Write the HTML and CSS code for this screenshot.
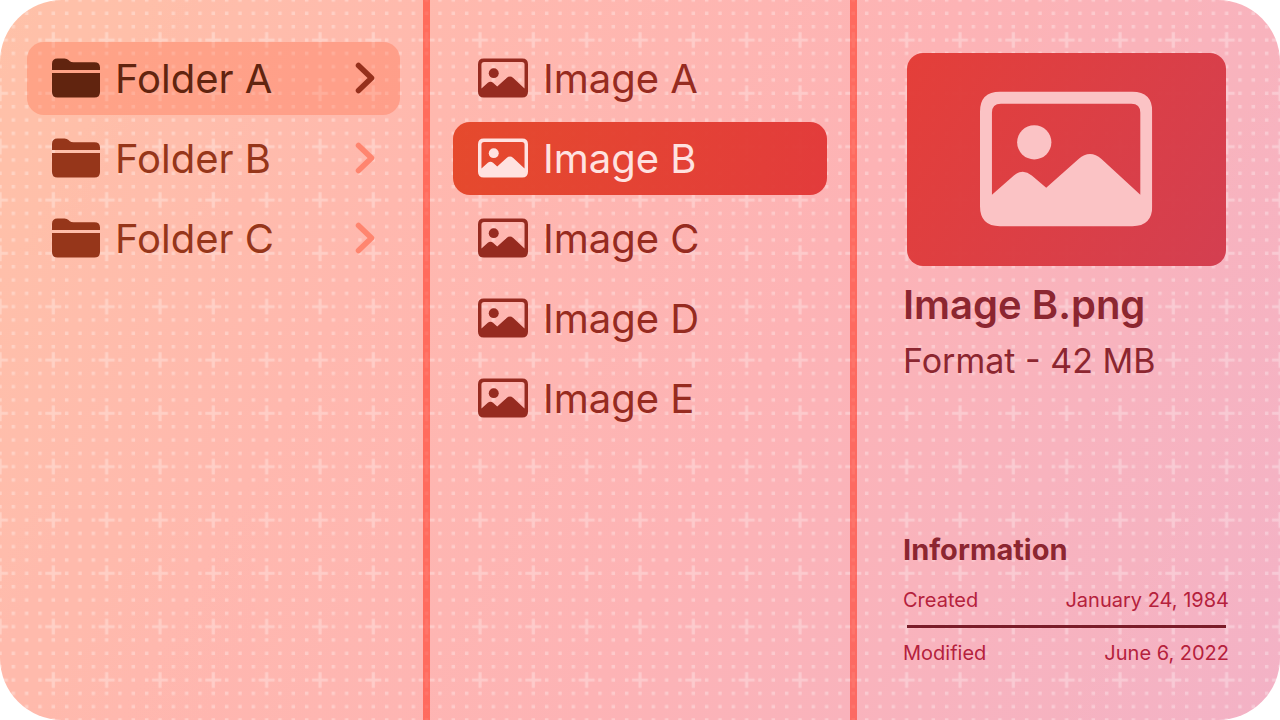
FILE: index.html
```html
<!DOCTYPE html>
<html lang="en">
<head>
    <meta charset="UTF-8">
    <meta name="viewport" content="width=device-width, initial-scale=1.0">
    <title>Column View</title>
    <link rel="stylesheet" href="styles.css">
</head>
<body>
    <!-- shared icons -->
    <svg class="sprite" aria-hidden="true">
        <symbol id="folder" viewBox="0 0 48 40">
            <path d="M0 12V6Q0 .5 5.5 .5H12.5Q15 .5 16.5 2L17.5 3Q19 4.3 21.5 4.3H42.5Q48 4.3 48 9.5V12Z"/>
            <path d="M0 15H48V34Q48 39.5 42.5 39.5H5.5Q0 39.5 0 34Z"/>
        </symbol>
        <symbol id="image" viewBox="0 0 173 135">
            <path fill-rule="evenodd" d="M20 0H153Q173 0 173 20V115Q173 135 153 135H20Q0 135 0 115V20Q0 0 20 0ZM21 12Q12 12 12 21V103.5L34 84Q43 76.5 52 84L66.5 96.5L99 67.5Q110.5 57.5 122 67.5L161 103.5V21Q161 12 152 12Z"/>
            <circle cx="54.5" cy="50.7" r="17.2"/>
        </symbol>
        <symbol id="chevron" viewBox="0 0 20 32">
            <path d="M3.5 3.5L16.5 16L3.5 28.5" fill="none" stroke="currentColor" stroke-width="5.5" stroke-linecap="round" stroke-linejoin="round"/>
        </symbol>
    </svg>

    <main class="browser">
        <svg class="grid-pattern" viewBox="0 0 960 540" preserveAspectRatio="xMinYMin slice" aria-hidden="true">
            <defs>
                <!-- 4x4 dots per tile, one of them swapped for a plus -->
                <pattern id="dots" width="40" height="40" patternUnits="userSpaceOnUse" x="-15" y="15">
                    <g stroke="#fff" stroke-width="2.6" stroke-dasharray="2.6 7.4">
                        <path d="M23.7 15H40M3.7 15H6.3"/>
                        <path d="M3.7 5H40M3.7 25H40M3.7 35H40"/>
                    </g>
                    <path d="M15 9V21M9 15H21" fill="none" stroke="#fff" stroke-width="2.4"/>
                </pattern>
            </defs>
            <rect width="100%" height="100%" fill="url(#dots)"/>
        </svg>

        <nav class="column folders" aria-label="Folders">
            <button class="row active" type="button">
                <svg class="icon"><use href="#folder"/></svg>
                <span>Folder A</span>
                <svg class="chevron"><use href="#chevron"/></svg>
            </button>
            <button class="row" type="button">
                <svg class="icon"><use href="#folder"/></svg>
                <span>Folder B</span>
                <svg class="chevron"><use href="#chevron"/></svg>
            </button>
            <button class="row" type="button">
                <svg class="icon"><use href="#folder"/></svg>
                <span>Folder C</span>
                <svg class="chevron"><use href="#chevron"/></svg>
            </button>
        </nav>

        <nav class="column images" aria-label="Images">
            <button class="row" type="button">
                <svg class="icon"><use href="#image"/></svg>
                <span>Image A</span>
            </button>
            <button class="row selected" type="button">
                <svg class="icon"><use href="#image"/></svg>
                <span>Image B</span>
            </button>
            <button class="row" type="button">
                <svg class="icon"><use href="#image"/></svg>
                <span>Image C</span>
            </button>
            <button class="row" type="button">
                <svg class="icon"><use href="#image"/></svg>
                <span>Image D</span>
            </button>
            <button class="row" type="button">
                <svg class="icon"><use href="#image"/></svg>
                <span>Image E</span>
            </button>
        </nav>

        <section class="preview">
            <div class="thumbnail">
                <svg><use href="#image"/></svg>
            </div>
            <h1>Image B.png</h1>
            <p>Format - 42 MB</p>

            <div class="information">
                <h2>Information</h2>
                <dl>
                    <div class="detail">
                        <dt>Created</dt>
                        <dd>January 24, 1984</dd>
                    </div>
                    <div class="detail">
                        <dt>Modified</dt>
                        <dd>June 6, 2022</dd>
                    </div>
                </dl>
            </div>
        </section>
    </main>
</body>
</html>
```
FILE: styles.css
```css
* {
    box-sizing: border-box;
}
body {
    font-family: Inter, Roboto, sans-serif;
    background-color: #fff;
    margin: 0;
}
.sprite {
    display: none;
}
.browser {
    position: relative;
    display: grid;
    grid-template-columns: 430fr 427fr 423fr;
    min-height: 100vh;
    border-radius: 62px;
    overflow: hidden;
    background: linear-gradient(118deg, #ffc2a8 0%, #ffb8ae 30%, #fdb3b5 58%, #f8b3be 78%, #f3b2c6 100%);
}
.grid-pattern {
    position: absolute;
    top: 0;
    left: 0;
    width: 100%;
    height: 100%;
    opacity: 0.3;
}

/* columns */
.column {
    position: relative;
    display: flex;
    flex-direction: column;
    gap: 7px;
    padding: 42px 23px;
    border-right: 7px solid rgba(255, 45, 25, 0.55);
}
.folders {
    padding-left: 27px;
}
.row {
    display: flex;
    align-items: center;
    height: 73px;
    padding: 0 25px 2px;
    border: none;
    border-radius: 17px;
    background: none;
    font-family: inherit;
    font-size: 40px;
    text-align: left;
    cursor: pointer;
}
.row span {
    flex: 1;
    padding-top: 2px;
}
.row .icon {
    width: 50px;
    height: 40px;
    margin-right: 15px;
    fill: currentColor;
}
.folders .icon {
    width: 48px;
}
.row .chevron {
    width: 20px;
    height: 32px;
    color: #ff856f;
}
.folders .row {
    color: #96361a;
}
.folders .active {
    color: #61240f;
    background-color: rgba(255, 96, 56, 0.3);
}
.active .chevron {
    color: #96301c;
}
.images .row {
    color: #962b20;
}
.images .selected {
    color: #ffe2e0;
    background: linear-gradient(100deg, rgba(228, 68, 38, 0.95), rgba(225, 53, 53, 0.95));
}

/* preview pane */
.preview {
    position: relative;
    display: flex;
    flex-direction: column;
    padding: 53px 51px 55px 46px;
    color: #8c2630;
}
.thumbnail {
    display: flex;
    align-items: center;
    justify-content: center;
    aspect-ratio: 3 / 2;
    margin: 0 3px 0 4px;
    border-radius: 16px;
    background: linear-gradient(120deg, rgba(227, 58, 52, 0.96), rgba(210, 58, 76, 0.96));
}
.thumbnail svg {
    width: 54%;
    height: 136px;
    fill: #fbc3c5;
}
.preview h1 {
    margin: 13px 0 0;
    font-size: 40px;
    font-weight: 600;
    line-height: 52px;
}
.preview p {
    margin: 8px 0 0;
    font-size: 34px;
    line-height: 44px;
}
.information {
    margin-top: auto;
}
.information h2 {
    margin: 0 0 20px;
    font-size: 29px;
    font-weight: 700;
    line-height: 36px;
}
.information dl {
    margin: 0;
    color: #b5213c;
}
.detail {
    display: flex;
    flex-wrap: wrap;
    justify-content: space-between;
    font-size: 20px;
    line-height: 24px;
}
.detail + .detail::before {
    content: "";
    flex: 0 0 calc(100% - 7px);
    height: 3px;
    margin: 13px 3px 13px 4px;
    background-color: #7a1c29;
}
.detail dd {
    margin: 0;
}
```
